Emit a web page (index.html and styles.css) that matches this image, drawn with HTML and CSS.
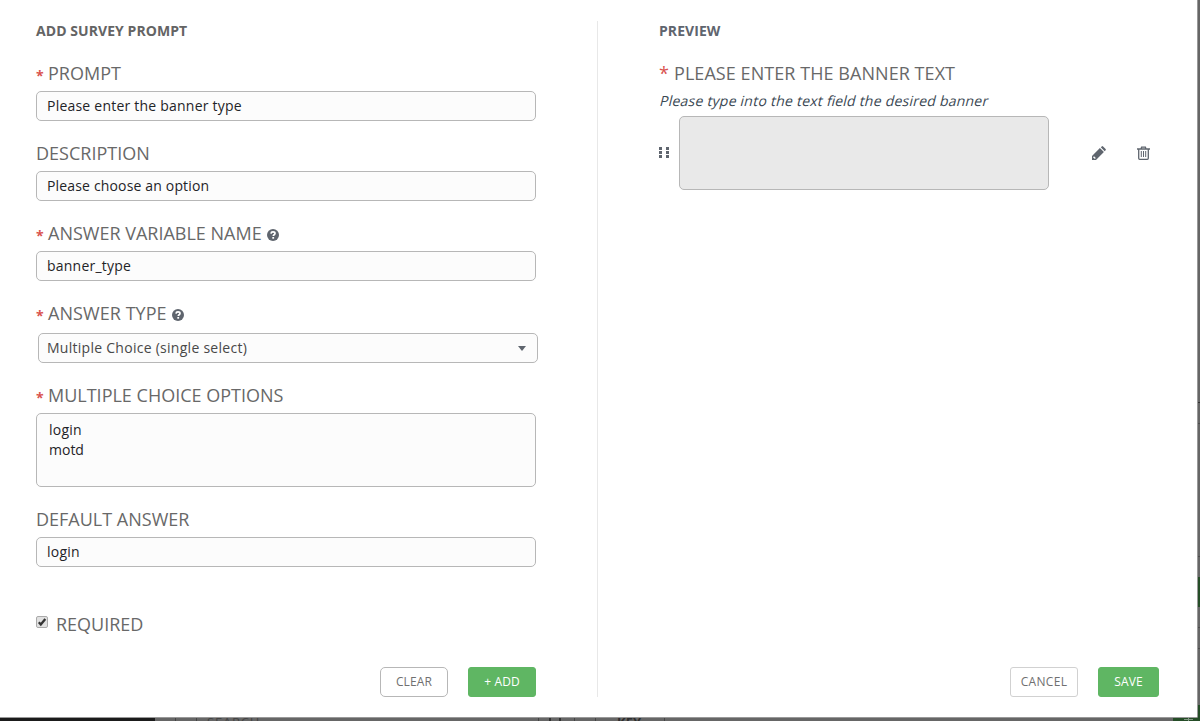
FILE: index.html
```html
<!DOCTYPE html>
<html lang="en">
<head>
<meta charset="utf-8">
<title>Survey prompt</title>
<link rel="stylesheet" href="styles.css">
</head>
<body>
<div class="backdrop">
  <span class="nav-dark"></span>
  <span class="tick t1"></span><span class="tick t2"></span><span class="tick t3"></span><span class="tick t4"></span><span class="tick t5"></span><span class="tick t6"></span>
  <span class="under search">SEARCH</span>
  <span class="under mark m1"></span><span class="under mark m2"></span>
  <span class="under key">KEY</span>
  <span class="edge e1"></span><span class="edge e2"></span><span class="edge e3"></span><span class="edge e4"></span><span class="edge e5"></span>
  <span class="green g1"></span><span class="green g2"></span><span class="green g3"></span><span class="plus-v"></span><span class="plus-h"></span>
</div>
<main class="modal">
  <section class="editor">
    <h1 class="title">ADD SURVEY PROMPT</h1>
    <div class="group">
      <div class="label"><span class="req">*</span><span class="lt">PROMPT</span></div>
      <div class="field">Please enter the banner type</div>
    </div>
    <div class="group">
      <div class="label"><span class="lt">DESCRIPTION</span></div>
      <div class="field narrow">Please choose an option</div>
    </div>
    <div class="group">
      <div class="label"><span class="req">*</span><span class="lt">ANSWER VARIABLE NAME</span>
        <svg class="help" viewBox="0 0 12 12"><circle cx="6" cy="6" r="6"/><path d="M4 4.6C4.1 3.3 5 2.9 6 2.9c1.200 0 2 .6 2 1.500 0 1.300-1.700 1.300-1.700 2.500" /><rect x="5.300" y="8" width="1.800" height="1.700"/></svg></div>
      <div class="field">banner_type</div>
    </div>
    <div class="group select-group">
      <div class="label"><span class="req">*</span><span class="lt wide">ANSWER TYPE</span>
        <svg class="help" viewBox="0 0 12 12"><circle cx="6" cy="6" r="6"/><path d="M4 4.6C4.1 3.3 5 2.9 6 2.9c1.200 0 2 .6 2 1.500 0 1.300-1.700 1.300-1.700 2.500" /><rect x="5.300" y="8" width="1.800" height="1.700"/></svg></div>
      <div class="field select"><span>Multiple Choice (single select)</span><svg class="caret" viewBox="0 0 8 5"><path d="M0 0h8L4 5z"/></svg></div>
    </div>
    <div class="group">
      <div class="label"><span class="req">*</span><span class="lt">MULTIPLE CHOICE OPTIONS</span></div>
      <div class="field area">login<br><span class="tight">motd</span></div>
    </div>
    <div class="group">
      <div class="label"><span class="lt">DEFAULT ANSWER</span></div>
      <div class="field">login</div>
    </div>
    <div class="required">
      <svg class="check" viewBox="0 0 12 12"><rect class="box" x=".5" y=".5" width="11" height="11" rx="1.500"/><path d="M2.800 6.300l2 2.200L9.300 3"/></svg>
      <span class="lt">REQUIRED</span>
    </div>
    <div class="actions"><span class="btn clear">CLEAR</span><span class="btn primary add">+ ADD</span></div>
  </section>
  <section class="preview">
    <h2 class="title cool">PREVIEW</h2>
    <div class="label"><span class="req big">*</span><span class="lt wide">PLEASE ENTER THE BANNER TEXT</span></div>
    <p class="desc">Please type into the text <span class="tight">fi</span>eld the desired banner</p>
    <div class="row">
      <svg class="grip" viewBox="0 0 10 11"><path d="M0 0h3v3H0zM7 0h3v3H7zM0 4h3v3H0zM7 4h3v3H7zM0 8h3v3H0zM7 8h3v3H7z"/></svg>
      <div class="answer"></div>
      <svg class="pencil" viewBox="0 0 14 14"><path fill-rule="evenodd" d="M0 14V10L7.900 2.100l4 4L4 14zM1.300 11v.9h.9v.9h.9l.7-.7-1.800-1.800zM8.800 1.300l.9-.9q.7-.6 1.400 0l2.500 2.500q.6.700 0 1.400l-.9.900z"/></svg>
      <svg class="trash" viewBox="0 0 13 14"><path d="M0 3h13M4 3l.6-1.800h3.800L9 3M1.700 3v9.200q0 1.100 1 1.100h7.600q1 0 1-1.100V3"/><path class="slats" d="M4.300 5v6M6.500 5v6M8.700 5v6"/></svg>
    </div>
    <div class="actions right"><span class="btn cancel">CANCEL</span><span class="btn primary save">SAVE</span></div>
  </section>
</main>
</body>
</html>
```

FILE: styles.css
```css
* { box-sizing: border-box; }
body { margin: 0; width: 1200px; height: 721px; overflow: hidden; background: #666; font-family: "Open Sans", sans-serif; font-size: 14px; color: #1f2428; position: relative; }
.backdrop { position: absolute; inset: 0; overflow: hidden; }
.backdrop span { position: absolute; }
.nav-dark { left: 0; top: 712px; width: 155px; height: 9px; background: #1b1b1b; }
.tick { top: 717px; width: 1px; height: 4px; background: #444; }
.t1 { left: 175px; } .t2 { left: 196px; } .t3 { left: 538px; } .t4 { left: 574px; } .t5 { left: 595px; } .t6 { left: 664px; }
.under { color: #444; line-height: 14px; }
.search { left: 207px; top: 715px; font-size: 13px; letter-spacing: .8px; }
.key { left: 617px; top: 715px; font-size: 13px; font-weight: 700; color: #2e2e2e; }
.mark { top: 718px; width: 2px; height: 3px; background: #333; }
.m1 { left: 549px; } .m2 { left: 559px; }
.edge { left: 1198px; width: 2px; height: 1px; background: #4d4d4d; }
.e1 { top: 402px; background: #333; } .e2 { top: 423px; } .e3 { top: 556px; } .e4 { top: 627px; } .e5 { top: 648px; }
.green { background: #254d27; }
.g1 { left: 1198px; top: 577px; width: 2px; height: 30px; }
.g2 { left: 1198px; top: 705px; width: 2px; height: 16px; }
.g3 { left: 1173px; top: 717px; width: 27px; height: 4px; }
.plus-v { left: 1188px; top: 718px; width: 1px; height: 3px; background: #829783; }
.plus-h { left: 1184px; top: 719px; width: 9px; height: 1px; background: #829783; }
.modal { position: relative; width: 1198px; height: 718px; background: #fff; border-right: 1px solid #999; border-bottom: 1px solid #999; border-bottom-right-radius: 2px; display: flex; padding-top: 21px; }
.editor { width: 598px; height: 676px; border-right: 1px solid #e8e8e8; padding-left: 36px; }
.title { margin: 0 0 20px; font-size: 14px; line-height: 20px; font-weight: 700; color: #646464; letter-spacing: .06px; }
.group { width: 500px; margin-bottom: 20px; }
.label { display: flex; height: 30px; line-height: 24px; }
.lt { font-size: 18px; color: #686868; white-space: nowrap; }
.wide { letter-spacing: .06px; }
.req { font-size: 14px; font-weight: 700; color: #d9534f; width: 12px; padding-top: 3px; }
.help { width: 12px; height: 12px; margin: 8px 0 0 5px; fill: #5f656e; flex: none; }
.help path { fill: none; stroke: #fff; stroke-width: 1.700; }
.help rect { fill: #fff; }
.field { height: 30px; border: 1px solid #b7b7b7; border-radius: 5px; background: #fcfcfc; padding: 0 10px; line-height: 28px; white-space: nowrap; letter-spacing: .22px; }
.narrow { letter-spacing: .16px; }
.tight { letter-spacing: 0; }
.select-group .field { margin: 2px 0 0 2px; width: 500px; padding: 0 11px 0 8px; color: #484848; display: flex; justify-content: space-between; align-items: center; letter-spacing: .27px; }
.caret { width: 8px; height: 5px; fill: #5f656e; }
.area { height: 74px; padding: 6px 12px; line-height: 20px; }
.required { display: flex; align-items: center; margin-top: 45px; height: 24px; }
.check { width: 12px; height: 12px; margin: -5px 8px 0 0; }
.check .box { fill: #e1e1e1; stroke: #aaa; }
.check path { fill: none; stroke: #333; stroke-width: 2.300; }
.actions { display: flex; justify-content: flex-end; gap: 20px; width: 500px; margin-top: 31px; }
.btn { height: 30px; border-radius: 4px; border: 1px solid #b7b7b7; font-size: 12px; line-height: 28px; text-align: center; color: #707070; background: #fff; letter-spacing: .15px; }
.clear, .add { width: 68px; }
.clear { border-radius: 5px; }
.primary { background: #5fb663; border-color: #5fb663; color: #fff; border-radius: 3px; }
.cancel { width: 68px; border-color: #d1d1d1; border-radius: 3px; letter-spacing: .3px; }
.save { width: 61px; }
.preview { width: 500px; margin-left: 61px; height: 676px; display: flex; flex-direction: column; }
.preview .title { color: #5f656e; }
.big { font-size: 18px; font-weight: 400; width: 15px; padding: 0; }
.desc { margin: 0; height: 25px; line-height: 20px; color: #3a4853; white-space: nowrap; letter-spacing: .23px; transform: skewX(-14deg); transform-origin: 0 15px; }
.row { display: flex; align-items: center; height: 74px; }
.grip { width: 10px; height: 11px; fill: #5f656e; margin: 0 10px 1px 0; }
.answer { width: 370px; height: 74px; border: 1px solid #b7b7b7; border-radius: 5px; background: #e9e9e9; }
.pencil { width: 14px; height: 14px; fill: #5f656e; margin-left: 43px; }
.trash { width: 13px; height: 14px; margin-left: 31px; fill: none; stroke: #5f656e; stroke-width: 1.300; }
.trash .slats { stroke-width: 1; }
.right { margin-top: auto; }
```
